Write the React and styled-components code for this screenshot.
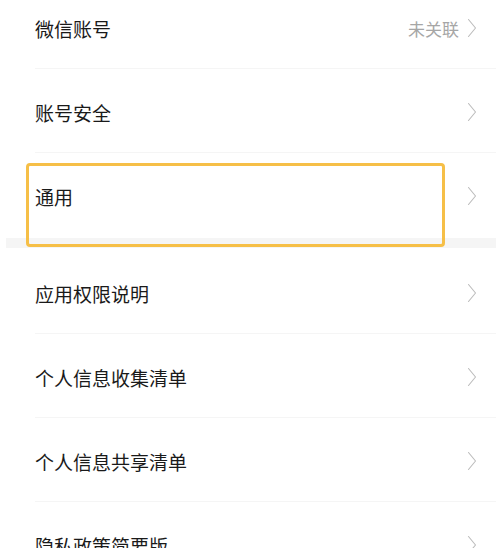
import React from "react";
import styled, { createGlobalStyle } from "styled-components";

const Global = createGlobalStyle`
  html, body { margin: 0; padding: 0; background: #ffffff; }
  body { overflow: hidden; font-family: "Noto Sans CJK SC", "Noto Sans", sans-serif; }
`;

const Page = styled.div`
  width: 496px;
  height: 548px;
  overflow: hidden;
  background: #ffffff;
`;

const Scroller = styled.div`
  margin-top: -14px;
  display: flex;
  flex-direction: column;
`;

const Group = styled.div`
  display: flex;
  flex-direction: column;
  padding-top: ${(p) => p.$padTop || 0}px;
`;

const Row = styled.div`
  position: relative;
  height: 84px;
  display: flex;
  align-items: center;
  padding: 0 19px 0 35px;
  box-sizing: border-box;
  &::after {
    content: "";
    display: ${(p) => (p.$divider ? "block" : "none")};
    position: absolute;
    left: 35px;
    right: 0;
    bottom: 1px;
    height: 1px;
    background: #f5f5f5;
  }
`;

const Label = styled.span`
  flex: 1;
  font-size: 19px;
  color: #1a1a1a;
  line-height: 1;
  letter-spacing: 0;
`;

const Value = styled.span`
  font-size: 17px;
  color: #a6a6a6;
  line-height: 1;
  margin-right: 8px;
`;

const Band = styled.div`
  height: 10px;
  margin-left: 6px;
  background: #f5f5f5;
`;

const Highlight = styled.div`
  position: absolute;
  left: 26px;
  top: 9px;
  width: 419px;
  height: 84px;
  box-sizing: border-box;
  border: 3px solid #f6bf47;
  border-radius: 4px;
  z-index: 2;
  pointer-events: none;
`;

const Chevron = () => (
  <svg width="10" height="20" viewBox="0 0 10 20" style={{ display: "block" }}>
    <polyline
      points="1.5,1.5 8.5,10 1.5,18.5"
      fill="none"
      stroke="#bcbcbc"
      strokeWidth="1.1"
      strokeLinecap="round"
      strokeLinejoin="round"
    />
  </svg>
);

const groupA = [
  { label: "微信账号", value: "未关联" },
  { label: "账号安全" },
  { label: "通用", highlight: true },
];

const groupB = [
  { label: "应用权限说明" },
  { label: "个人信息收集清单" },
  { label: "个人信息共享清单" },
  { label: "隐私政策简要版" },
];

const Item = ({ item, divider }) => (
  <Row $divider={divider}>
    <Label>{item.label}</Label>
    {item.value && <Value>{item.value}</Value>}
    <Chevron />
    {item.highlight && <Highlight />}
  </Row>
);

export default function App() {
  return (
    <Page>
      <Global />
      <Scroller>
        <Group>
          {groupA.map((it, i) => (
            <Item key={it.label} item={it} divider={i < groupA.length - 1} />
          ))}
        </Group>
        <Band />
        <Group $padTop={3}>
          {groupB.map((it, i) => (
            <Item key={it.label} item={it} divider={i < groupB.length - 1} />
          ))}
        </Group>
      </Scroller>
    </Page>
  );
}
